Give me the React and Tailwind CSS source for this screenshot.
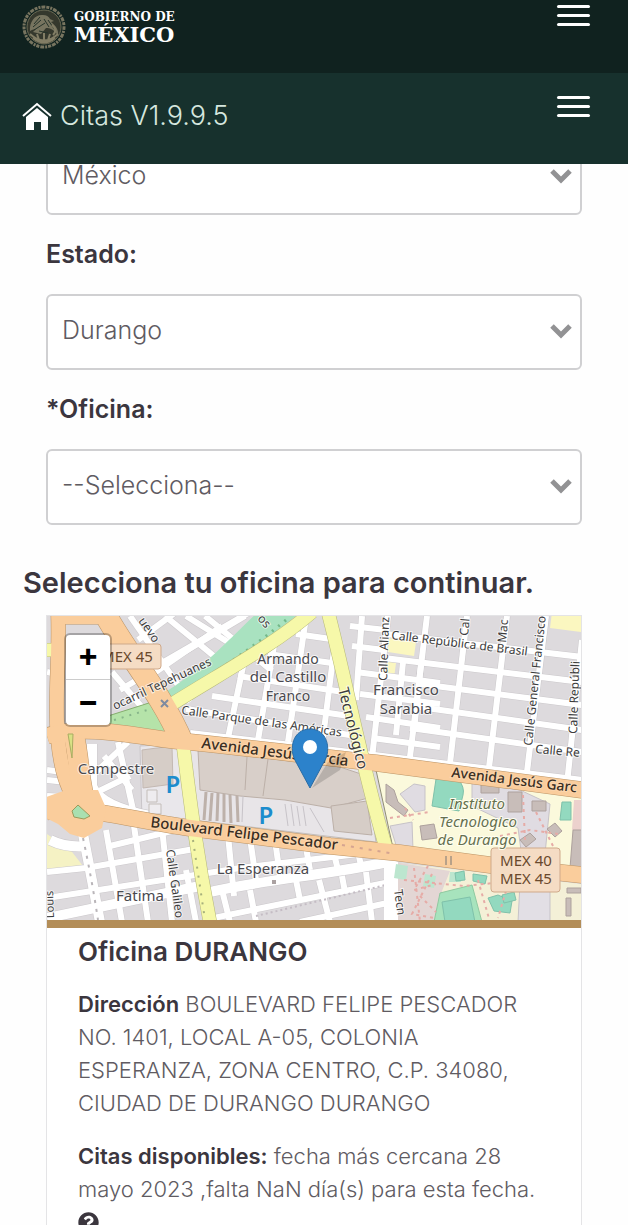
import { FaQuestionCircle } from "react-icons/fa";

const blockRoads = [
  // north west, slanted grid
  "M205 616 272 671", "M165 616 226 666", "M190 702 130 616", "M120 690 245 616", "M150 676 222 626",
  "M138 640 176 612", "M160 664 250 612", "M112 672 146 712", "M186 616 244 652",
  // around Armando del Castillo Franco
  "M296 634 338 640", "M268 654 346 665", "M238 676 350 693", "M212 696 356 717", "M186 709 362 737",
  "M305 624 288 742", "M275 640 258 740", "M244 662 228 738", "M334 650 322 746",
  // around Francisco Sarabia
  "M350 626 386 630", "M352 646 384 650", "M356 672 440 683", "M360 694 440 704", "M366 717 440 728", "M372 738 440 747",
  "M362 616 356 700", "M388 616 372 758", "M403 662 396 735", "M421 664 414 730",
  // east grid
  "M386 634 582 657", "M384 658 582 682", "M420 684 582 705", "M412 706 582 730", "M410 728 582 752",
  "M427 616 409 765", "M467 616 449 772", "M507 616 488 776", "M546 616 526 780", "M582 640 567 784",
  // west side
  "M47 672 64 676", "M47 780 66 782", "M47 796 66 797",
  "M118 742 134 814", "M96 772 128 742", "M104 756 132 790", "M93 794 130 776", "M47 770 62 772",
  // south west grid
  "M47 872 86 868 200 848", "M47 898 240 868 384 851", "M110 846 184 828",
  "M106 830 122 922", "M134 826 148 922", "M162 828 172 922", "M186 870 196 922",
  "M204 920 330 894 390 882", "M300 922 392 902",
  "M228 835 234 896", "M250 838 256 880", "M250 890 256 922", "M275 840 280 876", "M296 880 300 900", "M305 842 310 870", "M319 880 330 922",
  "M332 846 338 870", "M342 876 345 892", "M358 852 362 870", "M366 872 372 922", "M222 890 230 922",
];

const wideRoads = ["M50 840 Q66 848 88 846", "M206 893 C260 880 320 876 388 862", "M47 918 200 886", "M92 744 92 786 Q100 806 150 816", "M83 834 100 922", "M190 735 374 757 582 782"];

const orangeRoads = [
  { d: "M58 612 C60 660 54 700 58 740 S70 790 80 812", w: 14 },
  { d: "M74 736 C80 760 78 784 88 812", w: 20 },
  { d: "M56 617 H108", w: 14 },
  { d: "M104 612 C124 650 162 694 182 742", w: 22 },
  { d: "M47 736 C90 722 150 740 190 742 C270 750 320 757 376 763 L582 790", w: 16 },
  { d: "M46 812 C80 804 130 820 190 828 L330 846 400 853 490 865 582 875", w: 16 },
];

const yellowRoads = ["M312 612 C275 644 230 668 172 704", "M328 612 C346 680 360 760 386 848", "M183 744 C190 800 196 850 210 922", "M47 650 H58"];

const mapText = [
  { t: "Armando", x: 288, y: 664, s: 14 },
  { t: "del Castillo", x: 288, y: 682, s: 15 },
  { t: "Franco", x: 288, y: 701, s: 14 },
  { t: "Francisco", x: 406, y: 695, s: 15 },
  { t: "Sarabia", x: 406, y: 714, s: 15 },
  { t: "Campestre", x: 116, y: 774, s: 15 },
  { t: "La Esperanza", x: 263, y: 874, s: 15 },
  { t: "Fatima", x: 140, y: 901, s: 15 },
];

const streetText = [
  { t: "uevo", x: 138, y: 621, r: 55, s: 12 },
  { t: "os", x: 257, y: 619, r: 48, s: 12 },
  { t: "ocarril Tepehuanes", x: 115, y: 710, r: -25, s: 12 },
  { t: "Calle Parque de las Américas", x: 181, y: 714, r: 8, s: 12 },
  { t: "Tecnológico", x: 338, y: 689, r: 76, s: 15 },
  { t: "Calle Alianz", x: 387, y: 681, r: -88, s: 12 },
  { t: "Calle República de Brasil", x: 391, y: 639, r: 7, s: 12 },
  { t: "Cal", x: 468, y: 636, r: -85, s: 12 },
  { t: "Mac", x: 506, y: 643, r: -85, s: 12 },
  { t: "Calle General Francisco", x: 532, y: 746, r: -84, s: 12 },
  { t: "Calle Repúbli", x: 577, y: 734, r: -88, s: 12 },
  { t: "Calle Re", x: 535, y: 753, r: 5, s: 12 },
  { t: "Calle Galileo", x: 166, y: 850, r: 82, s: 12 },
  { t: "Tecn", x: 394, y: 890, r: 82, s: 12 },
  { t: "Louis", x: 54, y: 918, r: -92, s: 11 },
];

const avenueText = [
  { t: "Avenida Jesús García", x: 201, y: 748, r: 7, s: 15 },
  { t: "Avenida Jesús Garc", x: 451, y: 777, r: 7, s: 14 },
  { t: "Boulevard Felipe Pescador", x: 150, y: 827, r: 7, s: 15 },
];

const schoolBuildings = [
  "M386 784 l8 6 4 12 10 8 -4 6 -18 -14z", "M420 826 l14 -2 3 14 -15 2z", "M481 784 h18 v9 h-18z", "M508 792 h14 v20 h-14z",
  "M532 801 h14 v10 h-14z", "M547 829 l8 -6 7 8 -7 6z", "M520 840 l10 -7 6 6 -10 8z", "M573 830 h9 v38 h-12z", "M567 888 h14 v5 h-14z", "M566 898 h5 v18 h-5z",
];

const greens = [
  "M436 779 l22 0 q7 8 5 16 l-4 16 -27 -5z", "M562 802 h9 v18 h-11z", "M442 902 l28 -5 5 25 -30 0z", "M488 898 l10 -3 14 6 -2 12 -16 -2z",
  "M455 873 l9 -2 1 9 -9 1z", "M473 874 l14 2 -2 8 -12 -3z", "M502 895 l12 -3 2 8 -12 3z",
];

function Labels({ items, color, weight }) {
  return items.map((l) => (
    <text
      key={`${l.t}-${l.x}`}
      x={l.x}
      y={l.y}
      fontSize={l.s}
      fontWeight={weight}
      fill={color}
      transform={l.r ? `rotate(${l.r} ${l.x} ${l.y})` : undefined}
      textAnchor={l.r ? "start" : "middle"}
      stroke="#ffffff"
      strokeOpacity={weight ? "0.2" : "0.7"}
      strokeWidth="2"
      paintOrder="stroke"
    >
      {l.t}
    </text>
  ));
}

function StreetMap() {
  return (
    <svg viewBox="47 616 534 304" preserveAspectRatio="xMidYMid slice" className="block h-[304px] w-full font-['Noto_Sans',sans-serif]" role="img" aria-label="Mapa de la oficina Durango">
      <rect x="0" y="560" width="700" height="420" fill="#dddadd" />

      <path d="M47 834 q10 8 22 14 l14 18 -36 4z" fill="#f5f2c4" />
      <path d="M552 612 h30 v20 l-32 -4z M388 638 l28 4 -2 14 -26 -4z M382 660 l14 3 -2 15 -14 0z" fill="#fbf7c0" />
      <path d="M140 746 l40 -2 14 84 -52 -8z" fill="#e9e7eb" stroke="#c9c5c9" />

      <g fill="none" strokeLinecap="butt">
        {blockRoads.map((d) => <path key={d} d={d} stroke="#cbc8cb" strokeWidth="7" />)}
        {wideRoads.map((d) => <path key={d} d={d} stroke="#cbc8cb" strokeWidth="11" />)}
        {blockRoads.map((d) => <path key={d} d={d} stroke="#ffffff" strokeWidth="6" />)}
        {wideRoads.map((d) => <path key={d} d={d} stroke="#ffffff" strokeWidth="10" />)}
      </g>
      <path d="M83 838 Q92 880 98 920" fill="none" stroke="#b9b5b9" strokeDasharray="3 6" strokeWidth="2" />
      <path d="M256 916 L390 884" fill="none" stroke="#c4bcc4" strokeDasharray="2 3" strokeWidth="2" />

      {/* shopping centre and its car parks */}
      <path d="M186 748 L365 769 376 842 192 820z" fill="#e8e5e8" stroke="#c3bdb9" />
      <path d="M198 750 L340 767 364 775 368 798 331 808 285 800 240 796 200 790z" fill="#d8cfc9" stroke="#bcb0a8" />
      <path d="M331 806 l36 -5 5 34 -38 -4z" fill="#d6cdc7" stroke="#bcb0a8" />
      <path d="M142 750 l30 -4 1 38 -30 4z" fill="#d6cdc7" stroke="#c3b8b2" />
      <path d="M247 757 l-2 33 M268 759 l-5 37" stroke="#bcb0a8" />
      <path d="M206 792 l-2 28 M212 793 l-2 28 M218 793 l-1 28 M224 794 l0 28 M230 795 l1 28 M237 796 l1 26" stroke="#bdb1aa" strokeWidth="3" />
      <path d="M243 796 l-1 26 M285 804 l3 22 M291 804 l3 22 M297 806 l3 20 M303 806 l3 20 M310 808 l14 24" stroke="#c7c3c8" />
      <path d="M147 790 h10 v12 h-10z M149 804 h12 v10 h-12z" fill="#eeecef" stroke="#c3bdb9" />

      {/* campus */}
      <path d="M376 770 L582 797 582 874 393 848z" fill="#fbf9dc" stroke="#8f8d74" />
      <path d="M400 794 l14 -10 11 2 0 24 -10 2z M472 782 l48 8 30 14 -6 60 -22 -6 -4 -30 -46 -22z M390 826 l22 -4 1 28 -16 -2z" fill="#e0dce2" stroke="#c7c3c8" />
      <path d="M574 800 h8 v30 h-10z" fill="#ecd1cd" />
      <path d="M390 862 L582 884 582 922 396 922z" fill="#f4f0d7" />
      <path d="M394 862 l56 9 -8 20 -4 30 -40 0z" fill="#e3d6d4" />
      <path d="M384 856 l14 6 0 60 -14 0z" fill="#ffffff" />
      <path d="M440 893 l32 -8 10 37 -48 0z" fill="#a7e3bd" stroke="#8fc9a0" />
      <path d="M396 864 l12 2 -2 14 -12 -2z M425 874 l11 2 -2 12 -11 -2z M450 872 l12 0 -1 10 -12 0z" fill="#bce6cf" />
      <path d="M520 883 l30 4 0 35 -32 0z" fill="#e2dfe5" stroke="#c7c3c8" />
      {greens.map((d) => <path key={d} d={d} fill="#93d9bf" stroke="#7fc1aa" />)}
      {schoolBuildings.map((d) => <path key={d} d={d} fill="#c8bdb9" stroke="#ada19d" />)}
      <g fill="none" stroke="#e6aba6" strokeDasharray="3 4" strokeWidth="2">
        <path d="M390 818 l40 -6 M405 808 l8 12 M523 795 l2 46 M500 836 l30 -6 28 4 M536 812 l20 40" />
        <path d="M414 868 l6 54 M404 880 l60 6 40 -4 M432 874 l-20 40 22 4 M478 880 l12 42 M508 884 l-10 34 M420 896 l16 16 M428 866 l-14 24 22 -6" />
      </g>

      {/* green belt beside the railway */}
      <path d="M258 612 h42 C270 640 225 670 168 702 l-6 -8 C200 672 228 640 258 612z" fill="#a9e2c0" />
      <path d="M286 620 C250 650 220 670 176 696" fill="none" stroke="#74b98a" strokeDasharray="2 6" strokeWidth="3" />
      <path d="M108 716 L152 702 170 734 108 726z" fill="#b5e3a9" stroke="#84ad6d" />
      <path d="M114 720 L154 708" stroke="#87b58a" strokeDasharray="2 6" strokeWidth="2" />

      <g fill="none">
        {yellowRoads.map((d) => <path key={d} d={d} stroke="#b6b978" strokeWidth="14" />)}
        {orangeRoads.map((r) => <path key={r.d} d={r.d} stroke="#bb9466" strokeWidth={r.w + 1} />)}
        {yellowRoads.map((d) => <path key={d} d={d} stroke="#f6f8a9" strokeWidth="13" />)}
        {orangeRoads.map((r) => <path key={r.d} d={r.d} stroke="#facd9c" strokeWidth={r.w} />)}
      </g>
      <path d="M46 797 L66 790 98 790 106 808 102 828 84 838 70 834 58 824 46 818z" fill="#facd9c" />
      <path d="M72 811 l6 -6 12 11 -6 3 -10 -2z" fill="#a9e0b0" stroke="#9b9b5c" />
      <path d="M68 734 h5 l-1 24z" fill="#d8e184" stroke="#a9ad62" />
      <path d="M193 840 l12 80" stroke="#a7b07c" strokeDasharray="2 7" strokeWidth="2" fill="none" />
      <path d="M342 845 l48 8" stroke="#d5a491" strokeDasharray="3 6" strokeWidth="2" />
      <path d="M161 700 l7 7 m0 -7 l-7 7" stroke="#7e8ba0" strokeWidth="2" />
      <path d="M446 856 v9 M451 856 v9" stroke="#777777" />
      <rect x="272" y="880" width="4" height="4" fill="#aaa1a1" />

      <g fill="#f5dcc4" stroke="#cfa98a">
        <rect x="92" y="644" width="69" height="25" rx="3" />
        <rect x="491" y="848" width="69" height="44" rx="3" />
      </g>
      <g fontSize="15" fill="#69492d" textAnchor="middle">
        <text x="127" y="662">MEX 45</text>
        <text x="526" y="866">MEX 40</text>
        <text x="526" y="884">MEX 45</text>
      </g>

      <Labels items={mapText} color="#4a494e" />
      <Labels items={streetText} color="#3c3c3c" />
      <Labels items={avenueText} color="#3a2e22" weight="500" />
      <g fontSize="15" fontStyle="italic" fill="#66704f" textAnchor="middle" stroke="#fffff0" strokeWidth="2" paintOrder="stroke">
        <text x="477" y="809">Instituto</text>
        <text x="478" y="827">Tecnologico</text>
        <text x="477" y="845">de Durango</text>
      </g>
      <g fontSize="24" fontWeight="600" fill="#1c8ccd" textAnchor="middle">
        <text x="173" y="793">P</text>
        <text x="266" y="824">P</text>
      </g>

      {/* office marker */}
      <path d="M312 788 L328 762 346 752 340 770z" fill="#000000" opacity="0.15" />
      <path d="M310 788 L296 762 C288 749 293 729 310 729 C327 729 332 749 324 762z" fill="#2c82cb" stroke="#2a6ca5" />
      <circle cx="310" cy="747" r="7" fill="#ffffff" />
    </svg>
  );
}

function Emblem() {
  return (
    <svg viewBox="0 0 44 44" className="size-11 shrink-0" fill="none" aria-hidden="true">
      <circle cx="22" cy="22" r="20" stroke="#77745f" strokeWidth="3" strokeDasharray="3 1 2 1 4 1" />
      <circle cx="22" cy="22" r="17" fill="#35382d" stroke="#6d6c56" />
      <path d="M8 26 C7 16 14 9 21 10 q5 0 7 4 l4 2 -3 1 c5 4 8 8 7 14 -4 -7 -8 -8 -12 -8 l-5 6 -8 -2 3 -3 c-3 0 -4 1 -6 2z" fill="#77745f" />
      <path d="M11 22 l8 -7 M12 25 l11 -7 M22 14 l5 8 M26 15 l7 10 M17 26 l9 2 M18 12 l-6 7" stroke="#25332a" />
      <path d="M8 29 q14 13 28 0 M11 33 q11 9 22 0 M15 29 l2 6 M22 28 v10 M28 29 l-2 6" stroke="#827d65" strokeWidth="2" />
      <path d="M30 20 q6 5 1 10" stroke="#827d65" strokeWidth="2" />
    </svg>
  );
}

function MenuButton({ label }) {
  return (
    <button type="button" aria-label={label} className="flex w-[33px] flex-col gap-[6px]">
      <span className="h-[3px] w-full rounded-sm bg-white" />
      <span className="h-[3px] w-full rounded-sm bg-white" />
      <span className="h-[3px] w-full rounded-sm bg-white" />
    </button>
  );
}

function SelectBox({ id, label, value }) {
  return (
    <div className="relative">
      <select
        id={id}
        aria-label={label}
        defaultValue={value}
        className="block h-[76px] w-full appearance-none rounded-md border-2 border-[#d0d0d2] bg-white px-[14px] pb-[2px] text-[25px] font-light text-[#605b62]"
      >
        <option>{value}</option>
      </select>
      <svg viewBox="0 0 24 18" className="pointer-events-none absolute top-7 right-[9px] h-[18px] w-6" fill="none" aria-hidden="true">
        <path d="M3 4 L12 13 L21 4" stroke="#929294" strokeWidth="5" />
      </svg>
    </div>
  );
}

function Field({ id, label, value }) {
  return (
    <div>
      <label htmlFor={id} className="flex h-[79px] items-center text-[25px] font-semibold text-[#3b363e]">{label}</label>
      <SelectBox id={id} value={value} />
    </div>
  );
}

export default function App() {
  return (
    <div className="h-screen overflow-hidden bg-[#fefefe] font-['Inter',sans-serif] text-[#3b363e]">
      <header className="relative z-10">
        <div className="flex h-[73px] items-start justify-between bg-[#10221f] pt-[5px] pr-[38px] pl-[22px]">
          <a href="#inicio" className="flex items-center gap-2 font-['DejaVu_Serif',serif] font-bold text-white">
            <Emblem />
            <span className="flex flex-col">
              <span className="text-[12px] leading-[14px]">GOBIERNO DE</span>
              <span className="text-[21px] leading-[21px]">MÉXICO</span>
            </span>
          </a>
          <MenuButton label="Menú de gobierno" />
        </div>
        <div className="flex h-[91px] items-start justify-between bg-[#17312d] pt-[23px] pr-[38px] pl-[22px]">
          <a href="#citas" className="flex items-center gap-2 text-[27px] leading-10 font-light text-[#d5e7df]">
            <svg viewBox="0 0 30 28" className="h-7 w-[30px]" aria-hidden="true">
              <path d="M1 14 L15 2 L29 14" fill="none" stroke="#ffffff" strokeWidth="2" />
              <path d="M4 15 L15 6 L26 15 V28 H19 V20 H12 V28 H4z" fill="#ffffff" />
            </svg>
            Citas V1.9.9.5
          </a>
          <MenuButton label="Menú de citas" />
        </div>
      </header>

      <main className="-mt-[25px]">
        <form className="px-[46px]">
          <SelectBox id="pais" label="País" value="México" />
          <Field id="estado" label="Estado:" value="Durango" />
          <Field id="oficina" label="*Oficina:" value="--Selecciona--" />
        </form>

        <h1 className="mt-10 mb-[14px] px-[23px] text-[29px] leading-9 font-semibold">Selecciona tu oficina para continuar.</h1>

        <section className="mx-[46px] border border-[#e4e4e6] bg-white">
          <div className="relative border-b-8 border-[#b38d58]">
            <StreetMap />
            <div className="absolute top-[17px] left-[17px] flex w-12 flex-col overflow-hidden rounded-md border-2 border-black/25 bg-white bg-clip-padding text-[32px] leading-none font-bold text-black">
              <button type="button" aria-label="Acercar" className="flex h-[45px] items-center justify-center border-b border-[#cccccc] pb-1">+</button>
              <button type="button" aria-label="Alejar" className="flex h-[45px] items-center justify-center pb-1">−</button>
            </div>
          </div>
          <div className="px-[31px] pt-[7px] pb-8 text-[22px] leading-[33px] font-light text-[#605b62]">
            <h2 className="mb-5 text-[26px] font-semibold text-[#3b363e]">Oficina DURANGO</h2>
            <p className="mb-5">
              <strong className="font-semibold text-[#3b363e]">Dirección</strong> BOULEVARD FELIPE PESCADOR<br />
              NO. 1401, LOCAL A-05, COLONIA<br />
              ESPERANZA, ZONA CENTRO, C.P. 34080,<br />
              CIUDAD DE DURANGO DURANGO
            </p>
            <p>
              <strong className="font-semibold text-[#3b363e]">Citas disponibles:</strong> fecha más cercana 28<br />
              mayo 2023 ,falta NaN día(s) para esta fecha.
            </p>
            <button type="button" aria-label="Ayuda" className="block pt-[6px] text-[21px] text-[#3b363e]">
              <FaQuestionCircle />
            </button>
          </div>
        </section>
      </main>
    </div>
  );
}
